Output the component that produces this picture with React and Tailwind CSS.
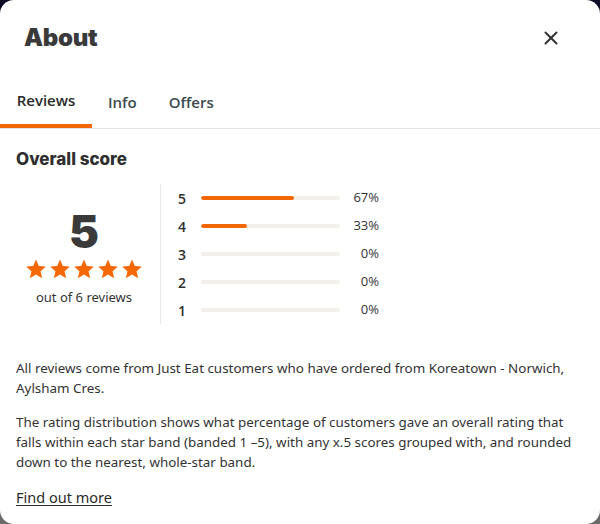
import { X } from 'lucide-react';

const bars = [
  { star: 5, pct: 67 },
  { star: 4, pct: 33 },
  { star: 3, pct: 0 },
  { star: 2, pct: 0 },
  { star: 1, pct: 0 },
];

function Star() {
  return (
    <svg width="22" height="22" viewBox="0 0 24 24" className="fill-[#f36805]">
      <path d="M12 1.5l3.1 7.1 7.7.7-5.8 5.1 1.7 7.6L12 18.1 5.3 22l1.7-7.6L1.2 9.3l7.7-.7z" />
    </svg>
  );
}

export default function App() {
  return (
    <div className="w-[600px] h-[524px] bg-gradient-to-b from-[#0b0a24] to-[#6b6b6b]">
      <div className="w-full h-full bg-white rounded-[14px] overflow-hidden text-[#2a2a2a] font-['Noto_Sans',sans-serif]">
        {/* Header */}
        <div className="h-[76px] flex items-center justify-between pl-6 pr-[38px]">
          <h2 className="text-[24px] font-black tracking-[-0.3px] text-[#3a3a3a] font-['Inter',sans-serif]">About</h2>
          <X size={22} strokeWidth={2.2} className="text-[#333]" />
        </div>

        {/* Tabs */}
        <div className="flex border-b border-[#e6e6e6] h-[53px] font-['Open_Sans',sans-serif] text-[15px] font-semibold">
          <div className="w-[92px] flex items-center justify-center border-b-4 border-[#f36805] text-[#2a2a2a]">Reviews</div>
          <div className="px-4 flex items-center text-[#3c4a4f]">Info</div>
          <div className="px-4 flex items-center text-[#3c4a4f]">Offers</div>
        </div>

        {/* Overall score */}
        <div className="px-4 pt-[18px]">
          <h3 className="text-[17px] font-extrabold text-[#2f2f2f] font-['Inter',sans-serif] leading-[24px]">Overall score</h3>
          <div className="flex mt-[13px]">
            <div className="w-[144px] flex flex-col items-center pt-[26px] pr-2">
              <div className="text-[45px] leading-[44px] font-black text-[#3a3a3a] font-['Inter',sans-serif]">5</div>
              <div className="flex gap-[2px] mt-[4px]">
                <Star /><Star /><Star /><Star /><Star />
              </div>
              <div className="text-[13px] text-[#333] mt-[8px]">out of 6 reviews</div>
            </div>
            <div className="border-l border-[#e8e8e8] pl-[17px] flex flex-col">
              {bars.map((b) => (
                <div key={b.star} className="h-7 flex items-center">
                  <span className="w-[23px] text-[14px] font-semibold text-[#2f2f2f] font-['Open_Sans',sans-serif]">{b.star}</span>
                  <div className="w-[139px] h-[4px] rounded-full bg-[#f3f0eb] overflow-hidden">
                    <div className="h-full bg-[#f36805] rounded-full" style={{ width: `${b.pct}%` }} />
                  </div>
                  <span className="w-[39px] text-right text-[13px] text-[#333] font-['Open_Sans',sans-serif]">{b.pct}%</span>
                </div>
              ))}
            </div>
          </div>
        </div>

        {/* Notes */}
        <div className="px-4 mt-[34px] text-[13.4px] leading-[20px] text-[#333]">
          <p>All reviews come from Just Eat customers who have ordered from Koreatown - Norwich, Aylsham Cres.</p>
          <p className="mt-[14px]">
            The rating distribution shows what percentage of customers gave an overall rating that falls within each star band (banded 1 –5), with any x.5 scores grouped with, and rounded down to the nearest, whole-star band.
          </p>
          <a className="inline-block mt-[15px] text-[14.5px] underline underline-offset-2 text-[#2a2a2a]">Find out more</a>
        </div>
      </div>
    </div>
  );
}
